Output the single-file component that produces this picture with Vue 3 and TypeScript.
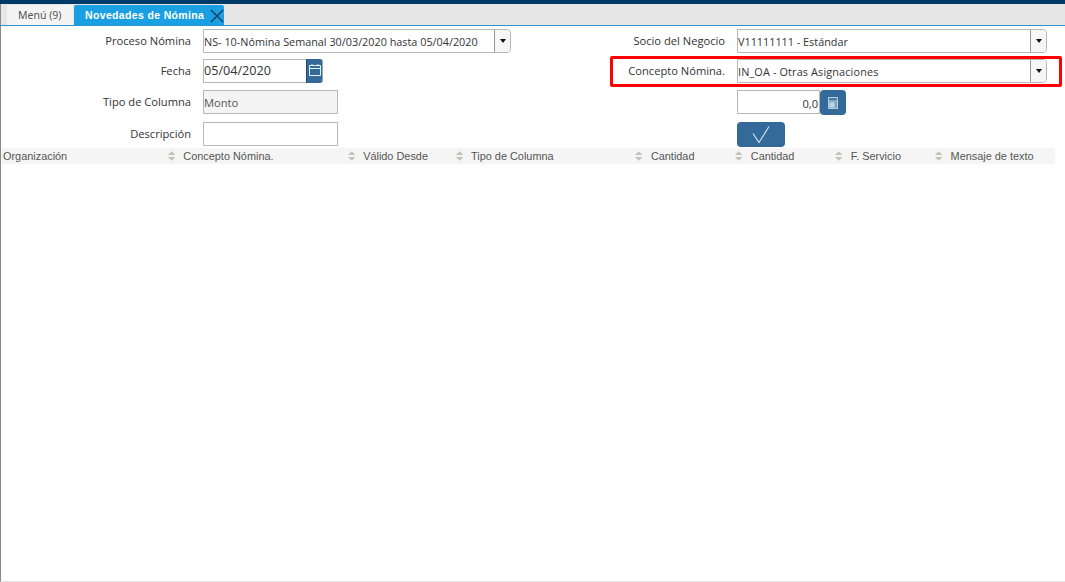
<script setup lang="ts">
interface Col { title: string; width: number }
const cols: Col[] = [
  { title: 'Organización', width: 180 },
  { title: 'Concepto Nómina.', width: 180 },
  { title: 'Válido Desde', width: 108 },
  { title: 'Tipo de Columna', width: 180 },
  { title: 'Cantidad', width: 100 },
  { title: 'Cantidad', width: 100 },
  { title: 'F. Servicio', width: 100 },
  { title: 'Mensaje de texto', width: 107 },
]
</script>

<template>
  <div class="page">
    <div class="topbar"></div>
    <div class="tabs">
      <div class="tab menu">Menú (9)</div>
      <div class="tab active">
        <span>Novedades de Nómina</span>
        <svg class="close" width="14" height="14" viewBox="0 0 14 14">
          <path d="M1 1L13 13M13 1L1 13" stroke="#17324d" stroke-width="1.1" fill="none" />
        </svg>
      </div>
    </div>
    <div class="content">
      <div class="form">
        <div class="label">Proceso Nómina</div>
        <div class="field">
          <div class="combo wide">
            <span class="combo-text">NS- 10-Nómina Semanal 30/03/2020 hasta 05/04/2020</span>
            <span class="combo-btn"><i class="caret"></i></span>
          </div>
        </div>
        <div class="label">Socio del Negocio</div>
        <div class="field">
          <div class="combo right">
            <span class="combo-text">V11111111 - Estándar</span>
            <span class="combo-btn"><i class="caret"></i></span>
          </div>
        </div>

        <div class="label">Fecha</div>
        <div class="field">
          <div class="date">05/04/2020</div>
          <button class="icon-btn cal" type="button">
            <svg width="14" height="15" viewBox="0 0 14 15">
              <path d="M1.5 4.5H12.5V14.5H1.5ZM1.5 7.5H12.5M4 3V5M10 3V5" stroke="#e4f1fb" stroke-width="1" fill="none" />
            </svg>
          </button>
        </div>
        <div class="label">Concepto Nómina.</div>
        <div class="field">
          <div class="combo right">
            <span class="combo-text spaced">IN_OA - Otras Asignaciones</span>
            <span class="combo-btn"><i class="caret"></i></span>
          </div>
        </div>

        <div class="label">Tipo de Columna</div>
        <div class="field"><div class="text-input disabled">Monto</div></div>
        <div class="label"></div>
        <div class="field">
          <div class="number">0,0</div>
          <button class="icon-btn calc" type="button">
            <svg width="10" height="12" viewBox="0 0 10 12">
              <rect x="0.5" y="0.5" width="9" height="11" fill="#7fa3c2" stroke="#b4cde0" />
              <rect x="1" y="3.5" width="8" height="1" fill="#b4cde0" />
              <rect x="1" y="1" width="8" height="2.5" fill="#4d7ea8" />
              <rect x="1.5" y="5.5" width="5" height="5" fill="#c0d5e6" />
            </svg>
          </button>
        </div>

        <div class="label">Descripción</div>
        <div class="field"><div class="text-input"></div></div>
        <div class="label"></div>
        <div class="field">
          <button class="ok" type="button">
            <svg width="26" height="20" viewBox="0 0 26 20">
              <path d="M5 8.5L11 17.5L21 1.5" stroke="#dbe8f2" stroke-width="1.1" fill="none" />
            </svg>
          </button>
        </div>
      </div>

      <div class="grid-head">
        <div v-for="(c, i) in cols" :key="i" class="th" :style="{ width: c.width + 'px' }">
          <span class="th-text">{{ c.title }}</span>
          <svg v-if="i < cols.length - 1" class="sort" width="7.5" height="10" viewBox="0 0 8 10">
            <path d="M4 0L8 4H0Z M4 10L8 6H0Z" fill="#c2c2b8" />
          </svg>
        </div>
      </div>
      <div class="grid-body"></div>
    </div>
    <div class="highlight"></div>
  </div>
</template>

<style>
html, body { margin: 0; background: #fff; }
</style>

<style scoped>
.page {
  position: relative;
  width: 1065px;
  height: 582px;
  display: flex;
  flex-direction: column;
  overflow: hidden;
  background: #fff;
  font-family: "Open Sans", sans-serif;
  color: #333;
  box-sizing: border-box;
}
.highlight {
  position: absolute;
  left: 610px;
  top: 56px;
  width: 452px;
  height: 31px;
  box-sizing: border-box;
  border: 3px solid #f00;
  border-radius: 2px;
  pointer-events: none;
}
.topbar { height: 4px; background: #003a69; flex: none; }
.tabs {
  height: 21px;
  flex: none;
  display: flex;
  align-items: flex-end;
  background: #e6e6e6;
  border-bottom: 1px solid #2b93cf;
  border-left: 1px solid #8a8a8a;
  padding-left: 6px;
}
.tab { height: 20px; display: flex; align-items: center; box-sizing: border-box; }
.menu {
  width: 66px;
  background: #f4f4f4;
  color: #555;
  font-size: 10.5px;
  padding-left: 11px;
  margin-right: 1px;
  font-family: "Noto Sans", sans-serif;
}
.active {
  width: 150px;
  background: #1b9fe3;
  color: #fff;
  font-weight: 700;
  font-size: 10.5px;
  padding-left: 11px;
  border-radius: 2px 2px 0 0;
  position: relative;
  font-family: "Liberation Sans", sans-serif;
  letter-spacing: 0.35px;
}
.close { position: absolute; left: 136px; top: 4px; }
.content {
  flex: 1;
  display: flex;
  flex-direction: column;
  border-left: 1px solid #8a8a8a;
  border-bottom: 1px solid #e0e0e0;
  min-height: 0;
}
.form {
  display: grid;
  grid-template-columns: 202px 408px 126px 1fr;
  grid-template-rows: 30px 31px 32px 26px;
  padding-top: 3px;
}
.label {
  font-size: 11.15px;
  line-height: 24px;
  text-align: right;
  padding-right: 12px;
  height: 24px;
  white-space: nowrap;
}
.field { display: flex; align-items: flex-start; }
.combo {
  height: 24px;
  box-sizing: border-box;
  border: 1px solid #b8b8b8;
  border-radius: 0 4px 4px 0;
  display: flex;
  background: #fff;
}
.wide { width: 308px; }
.right { width: 310px; }
.combo-text {
  flex: 1;
  font-size: 10.83px;
  line-height: 24px;
  white-space: nowrap;
  overflow: hidden;
  color: #333;
}
.spaced { letter-spacing: 0.15px; }
.combo-btn {
  width: 15px;
  flex: none;
  background: #f6f6f6;
  border-left: 1px solid #9a9a9a;
  border-radius: 0 3px 3px 0;
  display: flex;
  align-items: center;
  justify-content: center;
}
.caret {
  display: block;
  width: 0;
  height: 0;
  border-left: 3.5px solid transparent;
  border-right: 3.5px solid transparent;
  border-top: 4px solid #111;
}
.date {
  width: 103px;
  height: 24px;
  box-sizing: border-box;
  border: 1px solid #b8b8b8;
  border-right: none;
  font-size: 12.6px;
  line-height: 22px;
  color: #333;
}
.icon-btn {
  border: none;
  padding: 0;
  background: #336a99;
  display: flex;
  align-items: center;
  justify-content: center;
}
.cal {
  width: 17px;
  height: 24px;
  border-left: 1px solid #20486b;
  border-right: 1px solid #9aa;
  border-radius: 0 3px 3px 0;
  padding-bottom: 5px;
  box-sizing: border-box;
}
.text-input {
  width: 135px;
  height: 24px;
  box-sizing: border-box;
  border: 1px solid #b8b8b8;
  font-size: 11.15px;
  line-height: 24px;
  background: #fff;
}
.disabled { background: #f4f4f4; color: #555; }
.number {
  width: 83px;
  height: 24px;
  box-sizing: border-box;
  border: 1px solid #b8b8b8;
  font-size: 11.15px;
  line-height: 25px;
  text-align: right;
  padding-right: 1px;
}
.calc { width: 26px; height: 25px; border-radius: 4px; }
.ok {
  width: 48px;
  height: 25px;
  border-radius: 4px;
  border: none;
  padding: 0;
  background: #336a99;
  display: flex;
  align-items: center;
  justify-content: center;
}
.grid-head {
  display: flex;
  width: 1054px;
  height: 16px;
  background: #f5f5f5;
  flex: none;
  font-family: "Liberation Sans", sans-serif;
  font-size: 10.9px;
  color: #555;
}
.th {
  box-sizing: border-box;
  display: flex;
  align-items: center;
  justify-content: space-between;
  padding: 0 5.5px 0 2.5px;
  white-space: nowrap;
}
.th:first-child { padding-left: 2px; }
.grid-body { flex: 1; }
</style>
